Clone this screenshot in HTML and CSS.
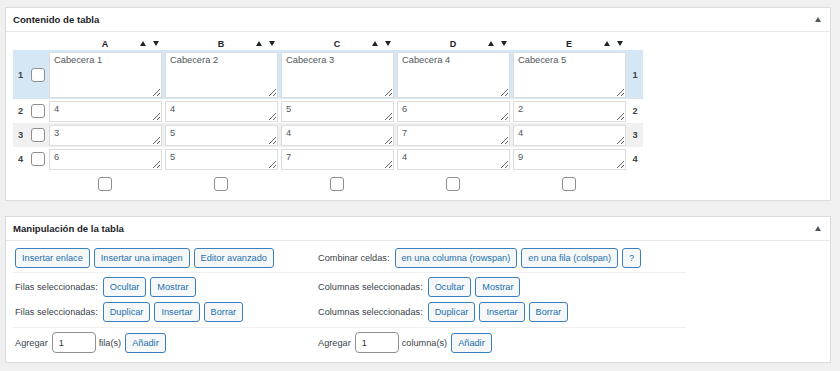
FILE: index.html
```html
<!DOCTYPE html>
<html lang="es">
<head>
    <meta charset="UTF-8">
    <title>Editar tabla</title>
    <link rel="stylesheet" href="styles.css">
</head>
<body>

    <div class="postbox">
        <div class="postbox-header">
            <h2>Contenido de tabla</h2>
            <svg class="toggle" width="6" height="5" viewBox="0 0 6 5"><polygon points="3,0 6,5 0,5"/></svg>
        </div>
        <div class="inside">
            <table class="edit-table">
                <thead>
                    <tr>
                        <th class="num-col"></th>
                        <th><div class="col-head"><span class="letter">A</span><span class="sort"><svg width="6" height="5" viewBox="0 0 6 5"><polygon points="3,0 6,5 0,5"/></svg><svg width="6" height="5" viewBox="0 0 6 5"><polygon points="0,0 6,0 3,5"/></svg></span></div></th>
                        <th><div class="col-head"><span class="letter">B</span><span class="sort"><svg width="6" height="5" viewBox="0 0 6 5"><polygon points="3,0 6,5 0,5"/></svg><svg width="6" height="5" viewBox="0 0 6 5"><polygon points="0,0 6,0 3,5"/></svg></span></div></th>
                        <th><div class="col-head"><span class="letter">C</span><span class="sort"><svg width="6" height="5" viewBox="0 0 6 5"><polygon points="3,0 6,5 0,5"/></svg><svg width="6" height="5" viewBox="0 0 6 5"><polygon points="0,0 6,0 3,5"/></svg></span></div></th>
                        <th><div class="col-head"><span class="letter">D</span><span class="sort"><svg width="6" height="5" viewBox="0 0 6 5"><polygon points="3,0 6,5 0,5"/></svg><svg width="6" height="5" viewBox="0 0 6 5"><polygon points="0,0 6,0 3,5"/></svg></span></div></th>
                        <th><div class="col-head"><span class="letter">E</span><span class="sort"><svg width="6" height="5" viewBox="0 0 6 5"><polygon points="3,0 6,5 0,5"/></svg><svg width="6" height="5" viewBox="0 0 6 5"><polygon points="0,0 6,0 3,5"/></svg></span></div></th>
                        <th class="num-col-r"></th>
                    </tr>
                </thead>
                <tbody>
                    <tr class="head-row">
                        <td class="num-col"><div class="row-num"><span>1</span><input type="checkbox"></div></td>
                        <td><textarea class="cell tall">Cabecera 1</textarea></td>
                        <td><textarea class="cell tall">Cabecera 2</textarea></td>
                        <td><textarea class="cell tall">Cabecera 3</textarea></td>
                        <td><textarea class="cell tall">Cabecera 4</textarea></td>
                        <td><textarea class="cell tall">Cabecera 5</textarea></td>
                        <td class="num-col-r">1</td>
                    </tr>
                    <tr>
                        <td class="num-col"><div class="row-num"><span>2</span><input type="checkbox"></div></td>
                        <td><textarea class="cell">4</textarea></td>
                        <td><textarea class="cell">4</textarea></td>
                        <td><textarea class="cell">5</textarea></td>
                        <td><textarea class="cell">6</textarea></td>
                        <td><textarea class="cell">2</textarea></td>
                        <td class="num-col-r">2</td>
                    </tr>
                    <tr class="odd-row">
                        <td class="num-col"><div class="row-num"><span>3</span><input type="checkbox"></div></td>
                        <td><textarea class="cell">3</textarea></td>
                        <td><textarea class="cell">5</textarea></td>
                        <td><textarea class="cell">4</textarea></td>
                        <td><textarea class="cell">7</textarea></td>
                        <td><textarea class="cell">4</textarea></td>
                        <td class="num-col-r">3</td>
                    </tr>
                    <tr>
                        <td class="num-col"><div class="row-num"><span>4</span><input type="checkbox"></div></td>
                        <td><textarea class="cell">6</textarea></td>
                        <td><textarea class="cell">5</textarea></td>
                        <td><textarea class="cell">7</textarea></td>
                        <td><textarea class="cell">4</textarea></td>
                        <td><textarea class="cell">9</textarea></td>
                        <td class="num-col-r">4</td>
                    </tr>
                </tbody>
                <tfoot>
                    <tr>
                        <td></td>
                        <td><input type="checkbox"></td>
                        <td><input type="checkbox"></td>
                        <td><input type="checkbox"></td>
                        <td><input type="checkbox"></td>
                        <td><input type="checkbox"></td>
                        <td></td>
                    </tr>
                </tfoot>
            </table>
        </div>
    </div>

    <div class="postbox">
        <div class="postbox-header">
            <h2>Manipulación de la tabla</h2>
            <svg class="toggle" width="6" height="5" viewBox="0 0 6 5"><polygon points="3,0 6,5 0,5"/></svg>
        </div>
        <div class="inside">
            <table class="tools">
                <tr class="sep first">
                    <td class="left">
                        <div class="line">
                            <button>Insertar enlace</button>
                            <button>Insertar una imagen</button>
                            <button>Editor avanzado</button>
                        </div>
                    </td>
                    <td class="right">
                        <div class="line">
                            <span class="label">Combinar celdas:</span>
                            <button>en una columna (rowspan)</button>
                            <button>en una fila (colspan)</button>
                            <button>?</button>
                        </div>
                    </td>
                </tr>
                <tr class="second">
                    <td class="left">
                        <div class="line">
                            <span class="label">Filas seleccionadas:</span>
                            <button>Ocultar</button>
                            <button>Mostrar</button>
                        </div>
                    </td>
                    <td class="right">
                        <div class="line">
                            <span class="label">Columnas seleccionadas:</span>
                            <button>Ocultar</button>
                            <button>Mostrar</button>
                        </div>
                    </td>
                </tr>
                <tr class="sep third">
                    <td class="left">
                        <div class="line">
                            <span class="label">Filas seleccionadas:</span>
                            <button>Duplicar</button>
                            <button>Insertar</button>
                            <button>Borrar</button>
                        </div>
                    </td>
                    <td class="right">
                        <div class="line">
                            <span class="label">Columnas seleccionadas:</span>
                            <button>Duplicar</button>
                            <button>Insertar</button>
                            <button>Borrar</button>
                        </div>
                    </td>
                </tr>
                <tr class="last">
                    <td class="left">
                        <div class="line tight">
                            <span class="label">Agregar</span>
                            <input type="text" class="small-num" value="1">
                            <span class="label">fila(s)</span>
                            <button>Añadir</button>
                        </div>
                    </td>
                    <td class="right">
                        <div class="line tight">
                            <span class="label">Agregar</span>
                            <input type="text" class="small-num" value="1">
                            <span class="label">columna(s)</span>
                            <button>Añadir</button>
                        </div>
                    </td>
                </tr>
            </table>
        </div>
    </div>

</body>
</html>
```

FILE: styles.css
```css
body {
    margin: 0;
    padding: 7px 9px 9px 5px;
    background-color: #f0f0f1;
    font-family: "Liberation Sans", Arial, sans-serif;
    font-size: 9.2px;
    color: #3c434a;
}

.postbox {
    background-color: #fff;
    border: 1px solid #dcdcde;
    margin-bottom: 15px;
}

.postbox:last-child {
    margin-bottom: 0;
}

.postbox-header {
    display: flex;
    align-items: center;
    justify-content: space-between;
    height: 23px;
    padding: 0 9px 0 7px;
    border-bottom: 1px solid #e8e8e9;
}

.postbox-header h2 {
    margin: 0;
    font-size: 9.6px;
    font-weight: 700;
    color: #1d2327;
}

.toggle {
    fill: #50575e;
}

.inside {
    padding: 5px 0 9px 7px;
}

/* table content */

.edit-table {
    border-collapse: collapse;
    border-spacing: 0;
}

.edit-table th {
    height: 13px;
    padding: 0;
    font-weight: 700;
    color: #1d2327;
}

.edit-table td {
    padding: 2px 1px 1px 2px;
}

.col-head {
    display: grid;
    grid-template-columns: 1fr auto 1fr;
    align-items: center;
    font-size: 9px;
}

.col-head .letter {
    grid-column: 2;
}

.col-head .sort {
    grid-column: 3;
    justify-self: end;
    display: flex;
    gap: 7px;
    padding-right: 4px;
}

.col-head svg {
    fill: #1d2327;
}

.edit-table td.num-col {
    width: 34px;
    padding: 0;
}

.row-num {
    display: flex;
    align-items: center;
    padding-left: 5px;
    font-weight: 700;
    color: #3c434a;
}

.row-num span {
    width: 13px;
}

.edit-table td.num-col-r {
    width: 16px;
    padding: 0;
    text-align: center;
    font-weight: 700;
}

.head-row td {
    background-color: #d5e7f4;
}

.odd-row td {
    background-color: #f0f0f1;
}

.cell {
    display: block;
    box-sizing: border-box;
    width: 113px;
    height: 21px;
    margin: 0;
    padding: 2px 4px;
    border: 1px solid #dcdcde;
    border-radius: 0;
    background-color: #fff;
    font-family: "Liberation Sans", Arial, sans-serif;
    font-size: 9.3px;
    color: #50575e;
}

.cell.tall {
    height: 46px;
}

input[type="checkbox"] {
    appearance: none;
    -webkit-appearance: none;
    box-sizing: border-box;
    width: 14px;
    height: 14px;
    margin: 0;
    border: 1px solid #8c8f94;
    border-radius: 3px;
    background-color: #fff;
}

.edit-table tfoot td {
    padding: 6px 0 0 0;
    text-align: center;
    line-height: 0;
}

/* table manipulation */

.tools {
    width: 673px;
    border-collapse: collapse;
}

.tools td {
    padding: 0 0 0 2px;
}

.tools td.left {
    width: 301px;
}

.tools tr.sep td {
    border-bottom: 1px solid #f0f0f1;
}

.tools tr.first td {
    padding-top: 2px;
    padding-bottom: 4px;
}

.tools tr.second td {
    padding-top: 4px;
    padding-bottom: 2px;
}

.tools tr.third td {
    padding-top: 3px;
    padding-bottom: 5px;
}

.tools tr.last td {
    padding-top: 4px;
}

.line {
    display: flex;
    align-items: center;
    gap: 4px;
}

.line .label {
    margin-right: 1px;
}

.line.tight {
    gap: 3px;
}

button {
    height: 20px;
    padding: 0 6px;
    border: 1px solid #3a7fbe;
    border-radius: 3px;
    background-color: #f6f7f7;
    color: #2271b1;
    font-family: "Liberation Sans", Arial, sans-serif;
    font-size: 9.2px;
    cursor: pointer;
}

.small-num {
    box-sizing: border-box;
    width: 44px;
    height: 21px;
    margin: 0;
    padding: 0 6px;
    border: 1px solid #8c8f94;
    border-radius: 4px;
    font-family: "Liberation Sans", Arial, sans-serif;
    font-size: 9.2px;
    color: #2c3338;
}
```
